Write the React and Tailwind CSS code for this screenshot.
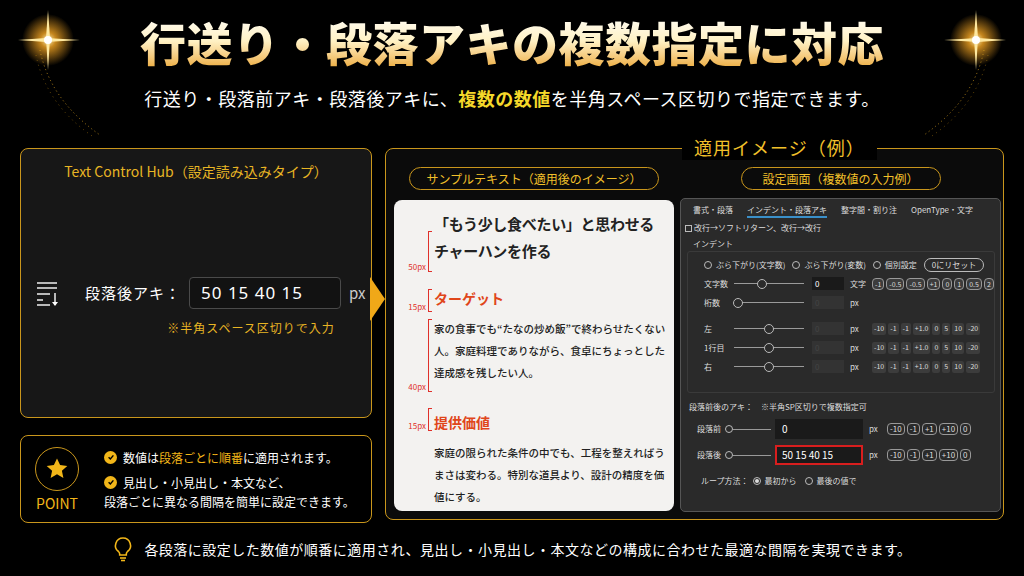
import React from "react";

const F = { fontFamily: '"Noto Sans CJK JP","Noto Sans",sans-serif' };

function Sparkle({ className }) {
  return (
    <svg className={className} width="110" height="140" viewBox="0 0 110 140">
      <defs>
        <radialGradient id="g1" cx="50%" cy="50%" r="50%">
          <stop offset="0" stopColor="#fff6c0" />
          <stop offset="0.3" stopColor="#f5a623" stopOpacity="0.8" />
          <stop offset="1" stopColor="#f5a623" stopOpacity="0" />
        </radialGradient>
      </defs>
      <circle cx="48" cy="40" r="26" fill="url(#g1)" />
      <path d="M48 10 L50 38 L48 70 L46 38Z" fill="#ffe9a0" />
      <path d="M18 40 L46 38 L80 40 L46 42Z" fill="#ffe9a0" />
      <circle cx="48" cy="40" r="4" fill="#fff" />
      <path d="M40 50 Q50 100 100 135" stroke="#d9a020" strokeWidth="1" strokeDasharray="1 3" fill="none" opacity="0.8" />
      <path d="M36 55 Q46 105 95 138" stroke="#b07f10" strokeWidth="1" strokeDasharray="1 4" fill="none" opacity="0.6" />
    </svg>
  );
}

function Slider({ pos = 0.5, w = 70 }) {
  return (
    <div className="relative h-[10px]" style={{ width: w }}>
      <div className="absolute left-0 right-0 top-[4.5px] h-px bg-[#9a9a9a]" />
      <div className="absolute top-0 w-[10px] h-[10px] rounded-full border border-[#bbb] bg-[#2b2b2b]" style={{ left: `calc(${pos * 100}% - 5px)` }} />
    </div>
  );
}

function Btns({ items, pill }) {
  return (
    <div className="flex gap-[2px]">
      {items.map((t, i) => (
        <span key={i} className={`px-[2px] h-[12px] leading-[11px] text-[7px] text-[#ddd] bg-[#3c3c3c] ${pill ? "border border-[#999] rounded-[4px]" : "rounded-[2px]"}`}>{t}</span>
      ))}
    </div>
  );
}

function SRow({ label, pos, val, unit, btns, pill, dim }) {
  return (
    <div className="flex items-center h-[19px] text-[8px] text-[#ddd]">
      <span className="w-[30px]">{label}</span>
      <Slider pos={pos} />
      <span className={`ml-[8px] w-[32px] h-[13px] px-[3px] leading-[13px] ${dim ? "bg-[#333] text-[#444]" : "bg-[#1a1a1a] text-white"}`}>{val}</span>
      <span className="ml-[6px] w-[22px]">{unit}</span>
      {btns && <Btns items={btns} pill={pill} />}
    </div>
  );
}

function Check() {
  return (
    <span className="w-[13px] h-[13px] rounded-full bg-[#f2b619] flex items-center justify-center shrink-0">
      <svg width="8" height="8" viewBox="0 0 10 10"><path d="M2 5.2 L4.2 7.4 L8 3" stroke="#000" strokeWidth="1.8" fill="none" /></svg>
    </span>
  );
}

export default function App() {
  return (
    <div className="w-[1024px] h-[576px] bg-black text-white relative overflow-hidden" style={F}>
      <Sparkle className="absolute left-[0px] top-[0px]" />
      <Sparkle className="absolute right-[0px] top-[0px] -scale-x-100" />

      <div className="flex flex-col items-center pt-[10px]">
        <h1 className="text-[46px] leading-[62px] font-black tracking-[0.5px] bg-gradient-to-b from-[#ffffff] via-[#fff1c4] to-[#e9a317] bg-clip-text text-transparent">行送り・段落アキの複数指定に対応</h1>
        <p className="mt-[14px] text-[18px] leading-[24px] tracking-[0.5px]">行送り・段落前アキ・段落後アキに、<span className="text-[#f5d82a] font-bold">複数の数値</span>を半角スペース区切りで指定できます。</p>
      </div>

      <div className="flex gap-[13px] px-[20px] mt-[38px]">
        <div className="w-[355px] flex flex-col gap-[17px]">
          <div className="h-[270px] rounded-[8px] border border-[#c9961c] bg-[#171717] flex flex-col items-center pt-[12px]">
            <div className="text-[14px] text-[#e8b524]">Text Control Hub（設定読み込みタイプ）</div>
            <div className="flex items-center mt-[95px] w-full pl-[14px]">
              <svg width="28" height="30" viewBox="0 0 28 30">
                <g stroke="#fff" strokeWidth="1.4">
                  <line x1="2" y1="5" x2="22" y2="5" /><line x1="2" y1="10" x2="22" y2="10" /><line x1="2" y1="16" x2="15" y2="16" /><line x1="2" y1="22" x2="8" y2="22" /><line x1="2" y1="27" x2="15" y2="27" /><line x1="20" y1="15" x2="20" y2="27" />
                </g>
                <path d="M17 24 L20 28 L23 24Z" fill="#fff" />
              </svg>
              <span className="ml-[22px] text-[15px] tracking-[1px]">段落後アキ：</span>
              <div className="ml-[8px] w-[152px] h-[32px] rounded-[4px] border border-[#4a4a4a] bg-[#121212] flex items-center pl-[11px] text-[17px] tracking-[1px]" style={{ fontFamily: '"Noto Sans",sans-serif' }}>50 15 40 15</div>
              <span className="ml-[8px] text-[15px] text-[#ccc]">px</span>
            </div>
            <div className="mt-[10px] ml-[110px] text-[12px] text-[#e8b524] tracking-[1px]">※半角スペース区切りで入力</div>
          </div>
          <div className="h-[88px] rounded-[8px] border border-[#c9961c] flex items-center pl-[14px]">
            <div className="flex flex-col items-center">
              <div className="w-[44px] h-[44px] rounded-full border border-[#c9961c] flex items-center justify-center">
                <svg width="24" height="24" viewBox="0 0 24 24"><path d="M12 1.5l3.1 6.6 7.2.8-5.4 4.9 1.5 7.1L12 17.3l-6.4 3.6 1.5-7.1L1.7 8.9l7.2-.8z" fill="#f2b619" /></svg>
              </div>
              <div className="mt-[3px] text-[14px] text-[#f2b619] leading-[18px]">POINT</div>
            </div>
            <div className="ml-[25px] flex flex-col gap-[6px] text-[12px] leading-[19px]">
              <div className="flex items-center gap-[6px]"><Check />数値は<span className="text-[#f2b619] -mx-[6px]">段落ごとに順番</span>に適用されます。</div>
              <div className="flex items-start gap-[6px]"><span className="mt-[3px]"><Check /></span><div>見出し・小見出し・本文など、<br /><span className="-ml-[19px]">段落ごとに異なる間隔を簡単に設定できます。</span></div></div>
            </div>
          </div>
        </div>

        <div className="relative w-[619px] h-[372px] rounded-[8px] border border-[#c9961c] bg-[#0b0b0b]">
          <div className="absolute -top-[15px] left-[296px] px-[12px] bg-black text-[18px] text-[#f2c02a] leading-[26px] tracking-[1px]">適用イメージ（例）</div>
          <div className="absolute -left-[16px] top-[128px] w-0 h-0 border-y-[22px] border-y-transparent border-l-[15px] border-l-[#f0a818]" />
          <div className="flex px-[8px] pt-[18px] gap-[6px]">
            <div className="w-[280px] flex flex-col items-center">
              <div className="w-[250px] h-[23px] rounded-full border border-[#c9961c] text-[12px] text-[#f2c02a] flex items-center justify-center">サンプルテキスト（適用後のイメージ）</div>
              <div className="relative mt-[10px] w-[280px] h-[311px] rounded-[8px] bg-[#f3f2f0] text-[#222] pl-[40px] pt-[10px] pr-[2px] overflow-hidden">
                <div className="text-[15px] font-bold leading-[27px] tracking-[-0.3px] whitespace-nowrap">「もう少し食べたい」と思わせる<br />チャーハンを作る</div>
                <div className="mt-[24px] text-[14px] font-bold text-[#e0461a] leading-[20px]">ターゲット</div>
                <div className="mt-[10px] text-[10.5px] leading-[22px] font-medium pr-[4px]">家の食事でも“たなの炒め飯”で終わらせたくない人。家庭料理でありながら、食卓にちょっとした達成感を残したい人。</div>
                <div className="mt-[28px] text-[14px] font-bold text-[#e0461a] leading-[20px]">提供価値</div>
                <div className="mt-[10px] text-[10.5px] leading-[22px] font-medium pr-[4px]">家庭の限られた条件の中でも、工程を整えればうまさは変わる。特別な道具より、設計の精度を価値にする。</div>
                {[
                  { t: 31, h: 41, l: "50px" },
                  { t: 89, h: 23, l: "15px" },
                  { t: 119, h: 73, l: "40px" },
                  { t: 208, h: 23, l: "15px" },
                ].map((b, i) => (
                  <div key={i} className="absolute left-[4px] flex items-end" style={{ top: b.t, height: b.h }}>
                    <span className="text-[8px] text-[#e0302a] leading-[10px] w-[30px] text-right pr-[2px]">{b.l}</span>
                    <span className="w-[4px] h-full border border-r-0 border-[#e0302a]" />
                  </div>
                ))}
              </div>
            </div>
            <div className="w-[321px] flex flex-col items-center">
              <div className="w-[200px] h-[23px] rounded-full border border-[#c9961c] text-[12px] text-[#f2c02a] flex items-center justify-center">設定画面（複数値の入力例）</div>
              <div className="mt-[8px] w-[321px] h-[314px] rounded-[5px] border border-[#555] bg-[#2a2a2a] px-[4px] pt-[5px] text-[8px] text-[#ddd]">
                <div className="flex gap-[14px] pl-[8px] h-[14px]">
                  <span>書式・段落</span>
                  <span className="border-b-2 border-[#3a8fc8]">インデント・段落アキ</span>
                  <span>整字間・割り注</span>
                  <span>OpenType・文字</span>
                </div>
                <div className="mt-[3px] flex items-center gap-[2px] h-[14px]"><span className="w-[7px] h-[7px] border border-[#bbb]" />改行→ソフトリターン、改行→改行</div>
                <div className="mt-[3px] ml-[8px] h-[12px]">インデント</div>
                <div className="mt-[1px] ml-[2px] mr-[1px] h-[142px] rounded-[3px] border border-[#3a3a3a] pl-[16px] pt-[4px]">
                  <div className="flex items-center gap-[4px] h-[18px] text-[8px]">
                    <span className="w-[8px] h-[8px] rounded-full border border-[#bbb]" />ぶら下がり(文字数)
                    <span className="ml-[3px] w-[8px] h-[8px] rounded-full border border-[#bbb]" />ぶら下がり(変数)
                    <span className="ml-[3px] w-[8px] h-[8px] rounded-full border border-[#bbb]" />個別設定
                    <span className="ml-[3px] px-[7px] h-[14px] leading-[12px] rounded-full border border-[#bbb]">0にリセット</span>
                  </div>
                  <SRow label="文字数" pos={0.4} val="0" unit="文字" btns={["-1", "-0.5", "-0.5", "+1", "0", "1", "0.5", "2"]} pill />
                  <SRow label="桁数" pos={0.05} val="0" unit="px" dim />
                  <div className="h-[7px]" />
                  <SRow label="左" pos={0.5} val="0" unit="px" btns={["-10", "-1", "-1", "+1.0", "0", "5", "10", "-20"]} dim />
                  <SRow label="1行目" pos={0.5} val="0" unit="px" btns={["-10", "-1", "-1", "+1.0", "0", "5", "10", "-20"]} dim />
                  <SRow label="右" pos={0.5} val="0" unit="px" btns={["-10", "-1", "-1", "+1.0", "0", "5", "10", "-20"]} dim />
                </div>
                <div className="mt-[8px] ml-[4px] h-[14px]">段落前後のアキ：　※半角SP区切りで複数指定可</div>
                <div className="ml-[12px] mt-[4px] flex flex-col gap-[6px]">
                  {[{ l: "段落前", v: "0", red: false }, { l: "段落後", v: "50 15 40 15", red: true }].map((r) => (
                    <div key={r.l} className="flex items-center h-[20px]">
                      <span className="w-[28px]">{r.l}</span>
                      <span className="w-[8px] h-[8px] rounded-full border border-[#bbb]" />
                      <span className="w-[38px] h-px bg-[#999]" />
                      <span className={`ml-[4px] w-[88px] h-[20px] leading-[16px] px-[5px] text-[10px] text-white bg-[#1a1a1a] ${r.red ? "border-2 border-[#d81e1e]" : "border-2 border-transparent"}`}>{r.v}</span>
                      <span className="ml-[6px] w-[18px]">px</span>
                      <div className="flex gap-[2px]">
                        {["-10", "-1", "+1", "+10", "0"].map((t, i) => (
                          <span key={i} className="px-[2px] h-[12px] leading-[10px] border border-[#999] rounded-[4px] text-[8px]">{t}</span>
                        ))}
                      </div>
                    </div>
                  ))}
                </div>
                <div className="mt-[10px] ml-[16px] flex items-center gap-[4px]">
                  ループ方法：
                  <span className="w-[8px] h-[8px] rounded-full border border-[#bbb] flex items-center justify-center"><span className="w-[4px] h-[4px] rounded-full bg-[#ddd]" /></span>最初から
                  <span className="ml-[4px] w-[8px] h-[8px] rounded-full border border-[#bbb]" />最後の値で
                </div>
              </div>
            </div>
          </div>
        </div>
      </div>

      <div className="absolute left-0 right-0 bottom-[14px] flex items-center justify-center gap-[10px]">
        <svg width="22" height="26" viewBox="0 0 22 26" fill="none" stroke="#f2b619" strokeWidth="1.6">
          <path d="M11 2a7.5 7.5 0 0 0-4.5 13.5c.8.7 1.2 1.5 1.2 2.5v1h6.6v-1c0-1 .4-1.8 1.2-2.5A7.5 7.5 0 0 0 11 2z" />
          <line x1="8" y1="22" x2="14" y2="22" /><line x1="9" y1="24.5" x2="13" y2="24.5" />
        </svg>
        <span className="text-[14px] tracking-[0.5px]">各段落に設定した数値が順番に適用され、見出し・小見出し・本文などの構成に合わせた最適な間隔を実現できます。</span>
      </div>
    </div>
  );
}
